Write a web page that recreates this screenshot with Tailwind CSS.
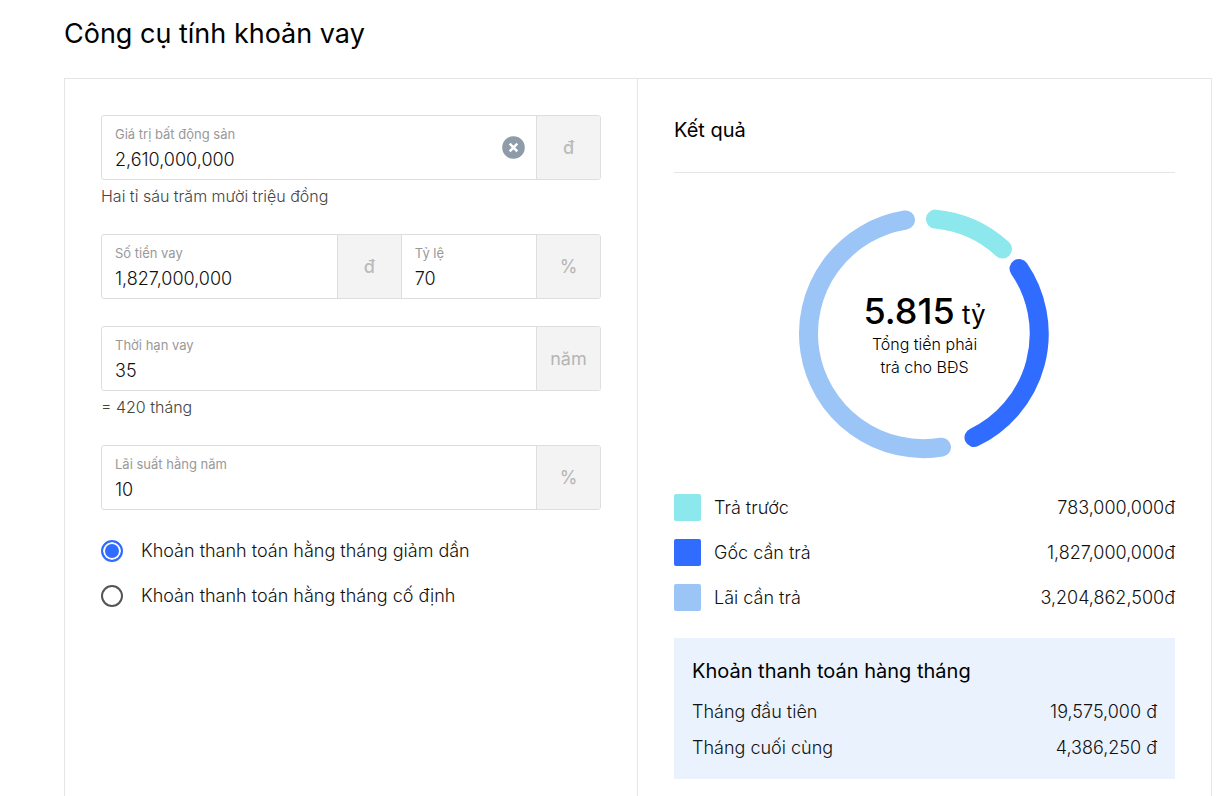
<!DOCTYPE html>
<html lang="vi">
<head>
<meta charset="utf-8">
<meta name="viewport" content="width=device-width, initial-scale=1">
<title>Công cụ tính khoản vay</title>
<script src="https://cdn.jsdelivr.net/npm/@tailwindcss/browser@4"></script>
</head>
<body class="bg-white font-['Inter','Noto_Sans',sans-serif] text-lg font-light text-[#111]">
<main class="pt-4 pr-[18px] pb-9 pl-16">
  <h1 class="text-[27px] leading-9 font-normal text-black">Công cụ tính khoản vay</h1>
  <div class="mt-[26px] grid grid-cols-2 border border-[#e5e5e5]">
    <form class="border-r border-[#e5e5e5] p-9">
      <div class="flex h-[65px] overflow-hidden rounded-[3px] border border-[#dedede]">
        <div class="flex min-w-0 flex-1 items-center">
          <div class="flex min-w-0 flex-1 flex-col px-[13px] pt-1">
            <label for="price" class="text-[13px] leading-5 font-normal text-[#999]">Giá trị bất động sản</label>
            <input id="price" type="text" value="2,610,000,000" class="h-8 w-full outline-none">
          </div>
          <button type="button" aria-label="Xóa" class="mr-[11px] shrink-0">
            <svg class="size-[23px]" viewBox="0 0 23 23"><circle cx="11.5" cy="11.5" r="11.3" fill="#8e9ba9"/><path d="M7.700 7.700l7.600 7.600M15.300 7.700l-7.600 7.600" stroke="#fff" stroke-width="2.500"/></svg>
          </button>
        </div>
        <span class="flex w-16 items-center justify-center border-l border-[#dedede] bg-[#f3f3f3] font-medium text-[#bbb]">đ</span>
      </div>
      <p class="mt-1 text-base leading-6 text-[#444]">Hai tỉ sáu trăm mười triệu đồng</p>

      <div class="mt-[26px] flex h-[65px] overflow-hidden rounded-[3px] border border-[#dedede]">
        <div class="flex w-3/5">
          <div class="flex min-w-0 flex-1 flex-col justify-center px-[13px] pt-1">
            <label for="loan" class="text-[13px] leading-5 font-normal text-[#999]">Số tiền vay</label>
            <input id="loan" type="text" value="1,827,000,000" class="h-8 w-full outline-none">
          </div>
          <span class="flex w-16 items-center justify-center border-l border-[#dedede] bg-[#f3f3f3] font-medium text-[#bbb]">đ</span>
        </div>
        <div class="flex flex-1 border-l border-[#dedede]">
          <div class="flex min-w-0 flex-1 flex-col justify-center px-[13px] pt-1">
            <label for="ratio" class="text-[13px] leading-5 font-normal text-[#999]">Tỷ lệ</label>
            <input id="ratio" type="text" value="70" class="h-8 w-full outline-none">
          </div>
          <span class="flex w-16 items-center justify-center border-l border-[#dedede] bg-[#f3f3f3] font-normal text-[#b5b5b5]">%</span>
        </div>
      </div>

      <div class="mt-[27px] flex h-[65px] overflow-hidden rounded-[3px] border border-[#dedede]">
        <div class="flex min-w-0 flex-1 flex-col justify-center px-[13px] pt-1">
          <label for="term" class="text-[13px] leading-5 font-normal text-[#999]">Thời hạn vay</label>
          <input id="term" type="text" value="35" class="h-8 w-full outline-none">
        </div>
        <span class="flex w-16 items-center justify-center border-l border-[#dedede] bg-[#f3f3f3] font-normal text-[#b5b5b5]">năm</span>
      </div>
      <p class="mt-1 text-base leading-6 text-[#444]">= 420 tháng</p>

      <div class="mt-[26px] flex h-[65px] overflow-hidden rounded-[3px] border border-[#dedede]">
        <div class="flex min-w-0 flex-1 flex-col justify-center px-[13px] pt-1">
          <label for="rate" class="text-[13px] leading-5 font-normal text-[#999]">Lãi suất hằng năm</label>
          <input id="rate" type="text" value="10" class="h-8 w-full outline-none">
        </div>
        <span class="flex w-16 items-center justify-center border-l border-[#dedede] bg-[#f3f3f3] font-normal text-[#b5b5b5]">%</span>
      </div>

      <fieldset class="mt-[27px] flex flex-col gap-[18px]">
        <label class="flex items-center gap-[18px] leading-[27px]">
          <input type="radio" name="plan" checked class="size-[22px] appearance-none rounded-full border-2 border-[#555] checked:border-[#306cff] checked:bg-[#306cff] checked:shadow-[inset_0_0_0_2px_#fff]">
          <span>Khoản thanh toán hằng tháng giảm dần</span>
        </label>
        <label class="flex items-center gap-[18px] leading-[27px]">
          <input type="radio" name="plan" class="size-[22px] appearance-none rounded-full border-2 border-[#555] checked:border-[#306cff] checked:bg-[#306cff] checked:shadow-[inset_0_0_0_2px_#fff]">
          <span>Khoản thanh toán hằng tháng cố định</span>
        </label>
      </fieldset>
    </form>

    <section class="p-9">
      <h2 class="border-b border-[#e5e5e5] pb-[27px] text-xl leading-[30px] font-normal text-black">Kết quả</h2>
      <div class="mt-9 grid place-items-center">
        <svg class="col-start-1 row-start-1 size-[250px] overflow-visible" viewBox="1 0 250 250" fill="none" stroke-width="19" stroke-linecap="round">
          <path d="M136.500 10.100A115.200 115.200 0 0 1 203.500 40" stroke="#8ce8ec"/>
          <path d="M220 59.500A115.200 115.200 0 0 1 175 228.500" stroke="#306cff"/>
          <path d="M142.500 238.200A115 115 0 1 1 106.500 11" stroke="#9bc5f6"/>
        </svg>
        <div class="col-start-1 row-start-1 pt-1 text-center text-black">
          <p class="text-[26px] leading-9 font-normal"><span class="text-4xl leading-9 font-medium">5.815</span> tỷ</p>
          <p class="text-base leading-[23px]">Tổng tiền phải<br>trả cho BĐS</p>
        </div>
      </div>
      <dl class="mt-[35px] flex flex-col gap-[18px] leading-[27px]">
        <div class="flex gap-[13px]"><dt class="flex flex-1 gap-[13px]"><span class="size-[27px] rounded-[2px] bg-[#8ce8ec]"></span>Trả trước</dt><dd>783,000,000đ</dd></div>
        <div class="flex gap-[13px]"><dt class="flex flex-1 gap-[13px]"><span class="size-[27px] rounded-[2px] bg-[#306cff]"></span>Gốc cần trả</dt><dd>1,827,000,000đ</dd></div>
        <div class="flex gap-[13px]"><dt class="flex flex-1 gap-[13px]"><span class="size-[27px] rounded-[2px] bg-[#9bc5f6]"></span>Lãi cần trả</dt><dd>3,204,862,500đ</dd></div>
      </dl>
      <div class="mt-[27px] bg-[#eaf3fd] p-[18px]">
        <h3 class="text-xl leading-[30px] font-normal text-black">Khoản thanh toán hàng tháng</h3>
        <dl class="mt-3 flex flex-col gap-[9px] leading-[27px]">
          <div class="flex justify-between"><dt>Tháng đầu tiên</dt><dd>19,575,000 đ</dd></div>
          <div class="flex justify-between"><dt>Tháng cuối cùng</dt><dd>4,386,250 đ</dd></div>
        </dl>
      </div>
    </section>
  </div>
</main>
</body>
</html>
